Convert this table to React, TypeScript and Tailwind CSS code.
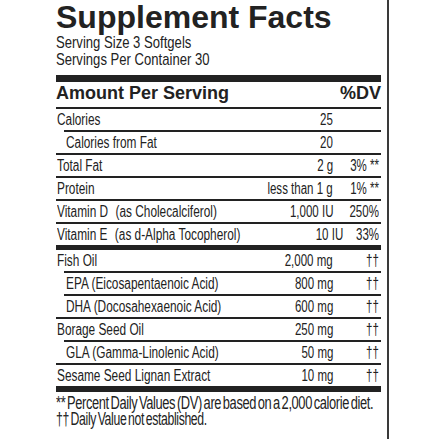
import clsx from "clsx";

type Row = {
    label: string;
    note?: string;
    amount: string;
    dv?: string;
    sub?: boolean;
};

const vitamins: Row[] = [
    { label: "Calories", amount: "25" },
    { label: "Calories from Fat", amount: "20", sub: true },
    { label: "Total Fat", amount: "2 g", dv: "3% **" },
    { label: "Protein", amount: "less than 1 g", dv: "1% **" },
    { label: "Vitamin D", note: "(as Cholecalciferol)", amount: "1,000 IU", dv: "250%" },
    { label: "Vitamin E", note: "(as d-Alpha Tocopherol)", amount: "10 IU", dv: "33%" },
];

const oils: Row[] = [
    { label: "Fish Oil", amount: "2,000 mg", dv: "††" },
    { label: "EPA (Eicosapentaenoic Acid)", amount: "800 mg", dv: "††", sub: true },
    { label: "DHA (Docosahexaenoic Acid)", amount: "600 mg", dv: "††", sub: true },
    { label: "Borage Seed Oil", amount: "250 mg", dv: "††" },
    { label: "GLA (Gamma-Linolenic Acid)", amount: "50 mg", dv: "††", sub: true },
    { label: "Sesame Seed Lignan Extract", amount: "10 mg", dv: "††" },
];

// the label uses a condensed face; squeeze Liberation Sans to get close
const tight = "inline-block whitespace-nowrap";

function FactRow({ row, first }: { row: Row; first: boolean }) {
    return (
        <div
            className={clsx(
                "box-content flex h-[21px] items-center text-[16px] leading-[21px]",
                !first && "border-t-2 border-[#222]",
                row.sub ? "ml-[8px] pl-[2px]" : "pl-[1px]"
            )}
        >
            <span className="flex-1">
                <span className={clsx(tight, "origin-left scale-x-[0.74]")}>
                    {row.label}
                    {row.note && <span className="ml-[10px]">{row.note}</span>}
                </span>
            </span>
            <span className={clsx(tight, "origin-right scale-x-[0.72] text-right")}>{row.amount}</span>
            <span className="w-[48px] pr-[2px] text-right">
                <span className={clsx(tight, "origin-right scale-x-[0.72]")}>{row.dv}</span>
            </span>
        </div>
    );
}

export default function App() {
    return (
        <div className="min-h-[439px] bg-white font-['Liberation_Sans',Arial,sans-serif] text-[#222]">
            <div className="ml-[56px] min-h-[439px] w-[333px] overflow-hidden border-r-2 border-[#3a3a3a] pr-[6px]">
                <h1 className="pt-[1px] text-[32px] font-bold leading-none">Supplement Facts</h1>
                <div className="mt-[1px] text-[17px] leading-[17px]">
                    <p className={clsx(tight, "origin-left scale-x-[0.77]")}>Serving Size 3 Softgels</p>
                    <br />
                    <p className={clsx(tight, "origin-left scale-x-[0.77]")}>Servings Per Container 30</p>
                </div>

                <div className="mt-[7px] h-[7px] bg-[#222]" />
                <div className="flex justify-between pb-[4px] pt-[1px] text-[18px] font-bold leading-[20px]">
                    <span>Amount Per Serving</span>
                    <span>%DV</span>
                </div>
                <div className="h-[2px] bg-[#222]" />

                {vitamins.map((r, i) => (
                    <FactRow key={r.label} row={r} first={i === 0} />
                ))}

                <div className="h-[5px] bg-[#222]" />

                {oils.map((r, i) => (
                    <FactRow key={r.label} row={r} first={i === 0} />
                ))}

                <div className="h-[6px] bg-[#222]" />

                <div className="pt-[3px] text-[17.5px] leading-[16px] tracking-[-0.5px] [word-spacing:-2px]">
                    <p className={clsx(tight, "origin-left scale-x-[0.735]")}>
                        ** Percent Daily Values (DV) are based on a 2,000 calorie diet.
                    </p>
                    <br />
                    <p className={clsx(tight, "origin-left scale-x-[0.7]")}>†† Daily Value not established.</p>
                </div>
            </div>
        </div>
    );
}
